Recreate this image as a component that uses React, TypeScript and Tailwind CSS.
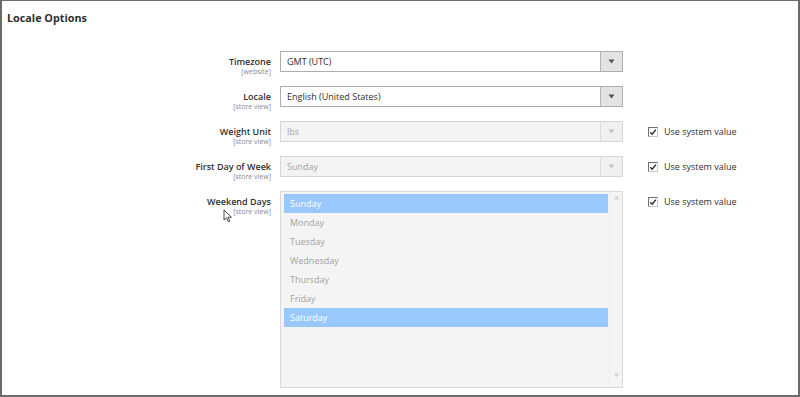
import React from "react";

const font = { fontFamily: '"Open Sans", "Liberation Sans", sans-serif' };

const Arrow = ({ muted }: { muted?: boolean }) => (
  <svg width="7" height="5" viewBox="0 0 7 5">
    <path d="M0.5 0.5 L6.5 0.5 L3.5 4.5 Z" fill={muted ? "#c4c4c4" : "#505050"} />
  </svg>
);

const Check = () => (
  <div className="flex items-center gap-[6px]">
    <span className="w-[10px] h-[10px] border border-[#707070] border-r-[#c9c9c9] border-b-[#c9c9c9] bg-white flex items-center justify-center">
      <svg width="8" height="8" viewBox="0 0 8 8">
        <path d="M1.2 4.2 L3.2 6.2 L6.8 1.8" stroke="#303030" strokeWidth="1.4" fill="none" />
      </svg>
    </span>
    <span className="text-[9px] text-[#303030] leading-[11px]">Use system value</span>
  </div>
);

const Label = ({ title, scope }: { title: string; scope: string }) => (
  <div className="w-[270px] h-[21px] shrink-0 text-right pt-[6px]">
    <div className="text-[9px] font-semibold text-[#303030] leading-[10px]">{title}</div>
    <div className="text-[7px] text-[#8a8a8a] leading-[8px] mt-[1px]">{scope}</div>
  </div>
);

const Select = ({ value, disabled }: { value: string; disabled?: boolean }) => (
  <div
    className={
      "w-[343px] h-[21px] flex border " +
      (disabled ? "border-[#d6d6d6] bg-[#f3f3f3]" : "border-[#adadad] bg-white")
    }
  >
    <div
      className={
        "flex-1 flex items-center pl-[6px] text-[9px] " +
        (disabled ? "text-[#a3a3a3]" : "text-[#303030]")
      }
    >
      {value}
    </div>
    <div
      className={
        "w-[22px] flex items-center justify-center border-l " +
        (disabled ? "border-[#dcdcdc] bg-[#f0f0f0]" : "border-[#b5b5b5] bg-[#e3e3e3]")
      }
    >
      <Arrow muted={disabled} />
    </div>
  </div>
);

const Row = ({
  title,
  scope,
  children,
  check,
}: {
  title: string;
  scope: string;
  children: React.ReactNode;
  check?: boolean;
}) => (
  <div className="flex items-start">
    <Label title={title} scope={scope} />
    <div className="ml-[9px]">{children}</div>
    {check && (
      <div className="ml-[25px] h-[21px] flex items-center">
        <Check />
      </div>
    )}
  </div>
);

const days = ["Sunday", "Monday", "Tuesday", "Wednesday", "Thursday", "Friday", "Saturday"];
const selected = ["Sunday", "Saturday"];

const MultiSelect = () => (
  <div className="w-[343px] h-[197px] border border-[#d9d9d9] bg-[#f4f4f4] flex">
    <div className="flex-1 pt-[2px] pl-[3px]">
      {days.map((d) => (
        <div
          key={d}
          className={
            "h-[19px] flex items-center pl-[6px] text-[9px] " +
            (selected.includes(d) ? "bg-[#99c8fc] text-white" : "text-[#a3a3a3]")
          }
        >
          {d}
        </div>
      ))}
    </div>
    <div className="w-[13px] ml-[1px] border-l border-[#ececec] flex flex-col justify-between items-center py-[3px]">
      <svg width="7" height="5" viewBox="0 0 7 5">
        <path d="M0.5 4.5 L3.5 0.5 L6.5 4.5 Z" fill="#d6d6d6" />
      </svg>
      <svg width="7" height="5" viewBox="0 0 7 5" className="mb-[6px]">
        <path d="M0.5 0.5 L6.5 0.5 L3.5 4.5 Z" fill="#d6d6d6" />
      </svg>
    </div>
  </div>
);

export default function App() {
  return (
    <div
      style={font}
      className="relative w-[800px] h-[397px] bg-white border-t border-l-2 border-r-2 border-b-2 border-[#6a6a6a] overflow-hidden"
    >
      <div className="pl-[5px] pt-[9px] text-[10.8px] font-bold text-[#303030] leading-[15px]">
        Locale Options
      </div>
      <div className="mt-[26px] flex flex-col gap-[14px] -ml-[1px]">
        <Row title="Timezone" scope="[website]">
          <Select value="GMT (UTC)" />
        </Row>
        <Row title="Locale" scope="[store view]">
          <Select value="English (United States)" />
        </Row>
        <Row title="Weight Unit" scope="[store view]" check>
          <Select value="lbs" disabled />
        </Row>
        <Row title="First Day of Week" scope="[store view]" check>
          <Select value="Sunday" disabled />
        </Row>
        <Row title="Weekend Days" scope="[store view]" check>
          <MultiSelect />
        </Row>
      </div>
      {/* mouse pointer */}
      <svg
        className="absolute left-[221px] top-[208px]"
        width="10"
        height="14"
        viewBox="0 0 10 14"
      >
        <path
          d="M1 1 L1 11 L3.5 8.8 L5.3 12.8 L6.8 12.1 L5 8.2 L8.4 8.2 Z"
          fill="white"
          stroke="#333"
          strokeWidth="0.9"
          strokeLinejoin="round"
        />
      </svg>
    </div>
  );
}
